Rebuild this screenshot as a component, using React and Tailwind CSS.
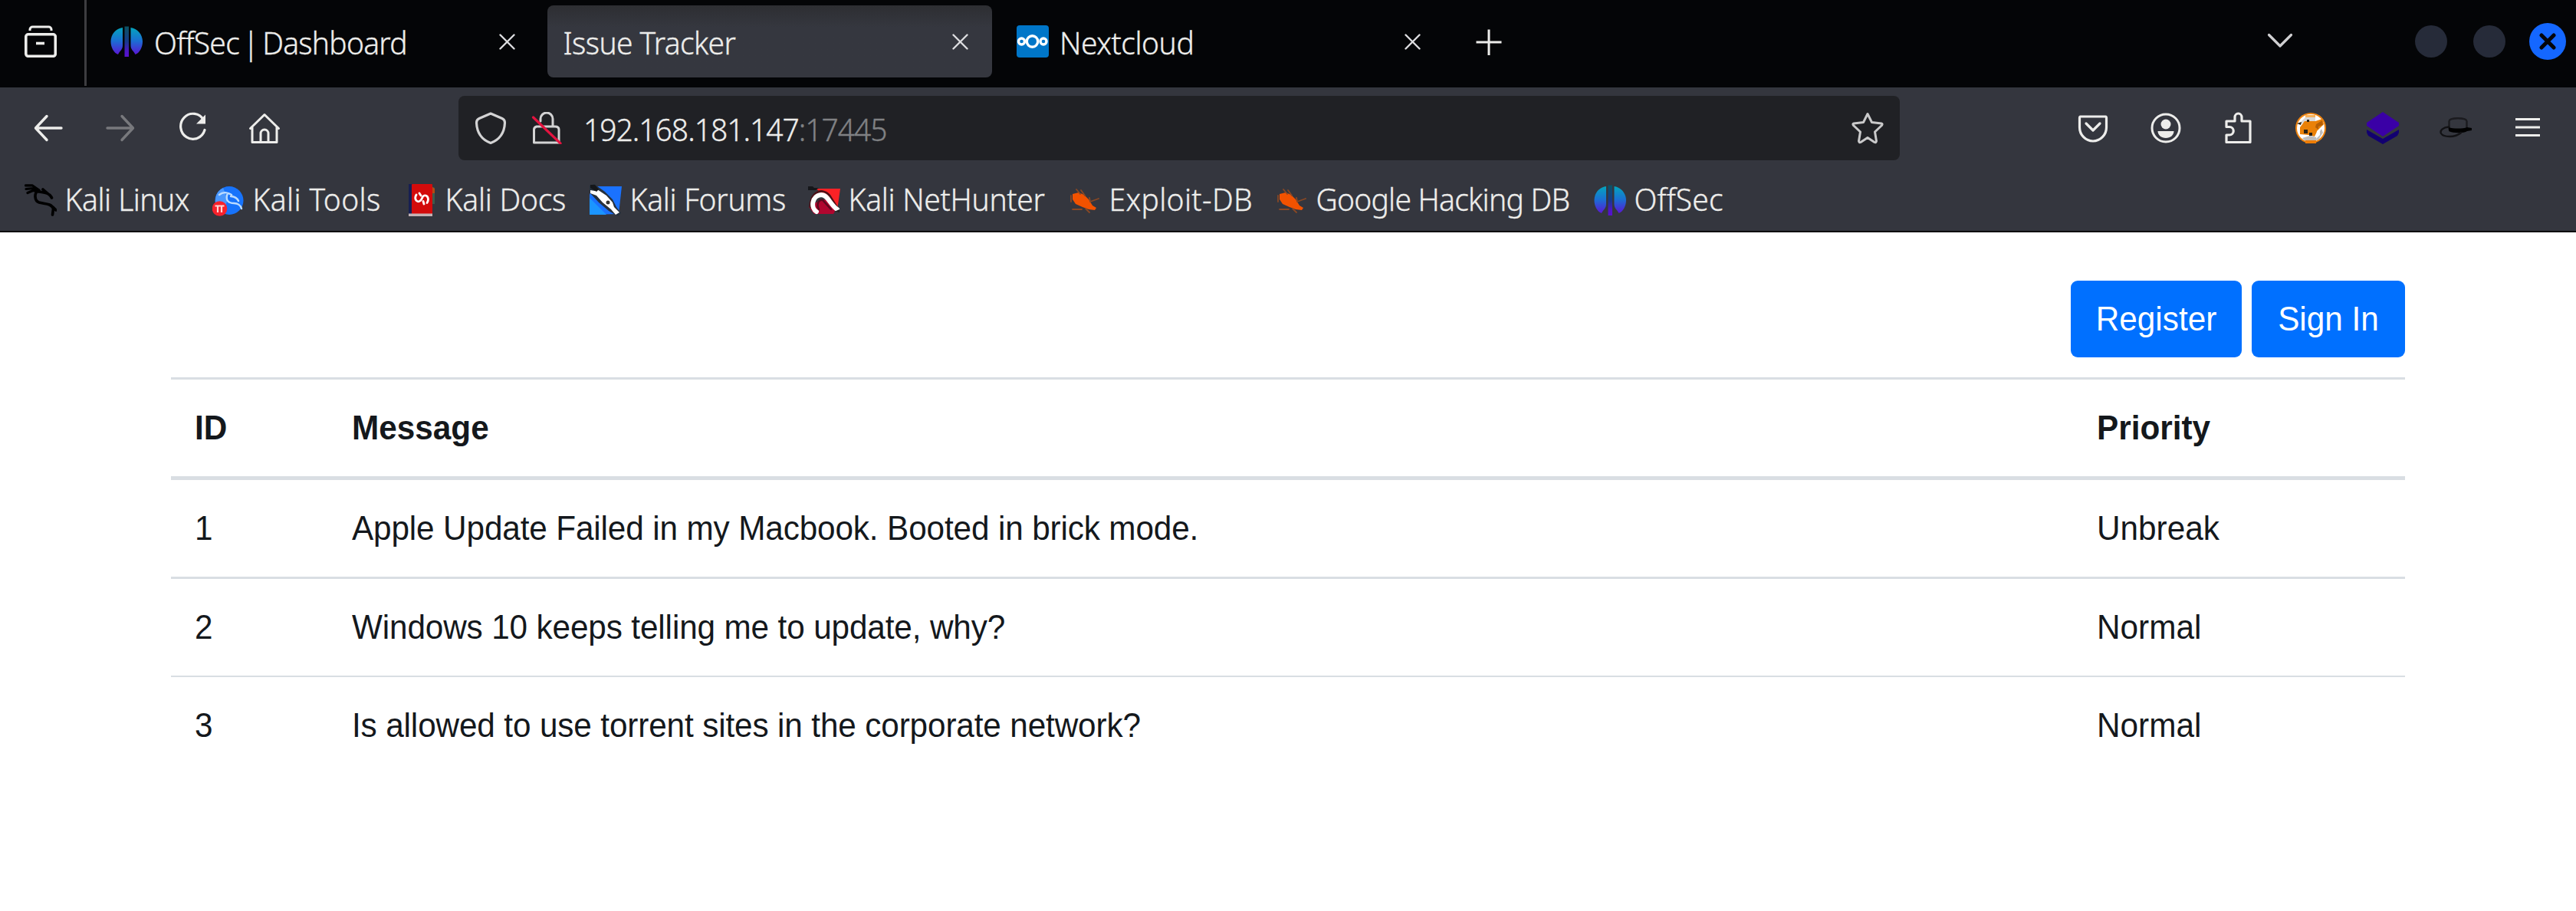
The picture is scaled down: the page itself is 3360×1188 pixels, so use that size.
import React from "react";

const Svg = ({ className = "", children, ...rest }) => (
  <svg
    width="42"
    height="42"
    viewBox="0 0 42 42"
    fill="none"
    stroke="currentColor"
    strokeWidth="3"
    strokeLinecap="round"
    strokeLinejoin="round"
    className={"block shrink-0 " + className}
    {...rest}
  >
    {children}
  </svg>
);

const Label = ({ className = "", children }) => (
  <span className={"block scale-y-[1.04] whitespace-pre font-['Noto_Sans',sans-serif] text-[39px] leading-[54px] font-[350] [-webkit-text-stroke:0.35px_currentColor] " + className}>
    {children}
  </span>
);

/* ---------- icons ---------- */

const FirefoxView = () => (
  <Svg strokeLinecap="butt">
    <path d="M7 7V5.5A3.500 3.500 0 0 1 10.500 2H31.500A3.500 3.500 0 0 1 35 5.500V7" />
    <rect x="1.800" y="11.800" width="38.500" height="28.500" rx="3" strokeWidth="3.600" />
    <path d="M15 23.500H26" strokeWidth="3.600" />
  </Svg>
);

const OffSec = ({ id }) => (
  <Svg stroke="none">
    <defs>
      <linearGradient id={id + "a"} x1="0" y1="3" x2="0" y2="38" gradientUnits="userSpaceOnUse">
        <stop offset="0" stopColor="#04a5bd" />
        <stop offset="0.5" stopColor="#1b6ed4" />
        <stop offset="1" stopColor="#5a16d6" />
      </linearGradient>
      <linearGradient id={id + "b"} x1="0" y1="0" x2="0" y2="42" gradientUnits="userSpaceOnUse">
        <stop offset="0" stopColor="#0b5560" />
        <stop offset="0.5" stopColor="#16398a" />
        <stop offset="0.8" stopColor="#4d16c4" />
        <stop offset="1" stopColor="#5a10d0" />
      </linearGradient>
    </defs>
    <path d="M16 3C7 4 0.500 12 0.500 21C0.500 29 4.500 36 10 38C12.500 33 16 32 16 26Z" fill={`url(#${id}a)`} />
    <path d="M26.500 3C35 4 42 12 42 21C42 29 38 36 32.500 38C30 33 26.500 32 26.500 26Z" fill={`url(#${id}a)`} />
    <path d="M18.500 1.500H24V41H18.500Z" fill={`url(#${id}b)`} />
  </Svg>
);

const Nextcloud = () => (
  <Svg stroke="#fff" strokeWidth="3.400">
    <rect width="42" height="42" rx="4" fill="#0076c8" stroke="none" />
    <circle cx="20.500" cy="21" r="7.200" />
    <circle cx="6.500" cy="21" r="4" />
    <circle cx="35" cy="21" r="4" />
  </Svg>
);

const TabClose = () => (
  <svg width="21" height="21" viewBox="0 0 21 21" className="block shrink-0" stroke="#dddde0" strokeWidth="2.400" strokeLinecap="round">
    <path d="M1.500 1.500L19.500 19.500M19.500 1.500L1.500 19.500" />
  </svg>
);

const Plus = () => (
  <Svg strokeLinecap="butt"><path d="M21 4.500V38M4.500 21H37.500" /></Svg>
);
const Chevron = () => (
  <Svg className="text-[#d0d0d2]" strokeWidth="3.200"><path d="M6.500 12.500L21 27L35.500 12.500" /></Svg>
);
const Back = () => (
  <Svg strokeWidth="3.400"><path d="M38 21H5M19 5.500L4.500 21L19 36.500" /></Svg>
);
const Forward = () => (
  <Svg strokeWidth="3.400" className="text-[#78797d]"><path d="M4 21H37M23 5.500L37.500 21L23 36.500" /></Svg>
);
const Reload = () => (
  <Svg strokeWidth="3.200">
    <path d="M35.500 10.500A16 16.500 0 1 0 37 23.500" />
    <path d="M38 3.500V15.500H26Z" fill="currentColor" stroke="none" />
  </Svg>
);
const Home = () => (
  <Svg strokeWidth="3">
    <path d="M2.500 21.500L21 3.500L39.500 21.500M5 19.500V39.500H37V19.500" />
    <path d="M16 39V28A5 5 0 0 1 26 28V39" />
  </Svg>
);
const Shield = () => (
  <Svg className="text-[#d3d3d4]" strokeWidth="3.200">
    <path d="M21 2L36 8.500Q39.500 10 39.500 14C39 26 33 36 21 40.500C9 36 3 26 2.500 14Q2.500 10 6 8.500Z" />
  </Svg>
);
const Lock = () => (
  <Svg className="text-[#d3d3d4]" strokeWidth="3">
    <path d="M12 12V9A8 8 0 0 1 28 9V19M7 19H31Q36 19 36 23V40H3.500V23Q3.500 20 7 19" />
    <path d="M2.500 7L38 41" stroke="#e3133f" strokeWidth="3.200" />
  </Svg>
);
const Star = () => (
  <Svg className="text-[#c9c9ca]" strokeWidth="3">
    <path d="M21 2.500L26.500 13.500L39 15Q41 15.500 39.500 17.500L30.500 26L32.500 38Q32 40.500 30 39.500L21 33.500L12 39.500Q10 40.500 9.500 38L11.500 26L2.500 17.500Q1 15.500 3 15L15.500 13.500Z" />
  </Svg>
);
const Pocket = () => (
  <Svg strokeWidth="3.200">
    <path d="M4.500 6H37.500Q38.500 6 38.500 8V20A17 17.500 0 0 1 3.500 20V8Q3.500 6 4.500 6Z" />
    <path d="M12 15L21 24L30 15" />
  </Svg>
);
const Account = () => (
  <Svg strokeWidth="3">
    <circle cx="21" cy="21" r="18" />
    <circle cx="21" cy="16" r="6.500" fill="currentColor" stroke="none" />
    <path d="M10.500 25H31.500C31.500 30 27 34 21 34C15 34 10.500 30 10.500 25Z" fill="currentColor" stroke="none" />
  </Svg>
);
const Puzzle = () => (
  <Svg strokeWidth="3.200">
    <path d="M6 12H17V7A4.500 5 0 0 1 26 7V12H37V39.500H6V30H10A5 5 0 0 0 10 19.500H6Z" />
  </Svg>
);
const FoxyProxy = () => (
  <Svg stroke="none">
    <circle cx="21" cy="21" r="20" fill="#ee8410" />
    <circle cx="21" cy="21" r="18" fill="#fff" />
    <path d="M5 16L14 7L24 4L27 7V12L15 14Z" fill="#d9d9d9" />
    <path d="M14 4H27V7H14Z" fill="#f7b25c" />
    <path d="M7 20L13 12L27 12L36 9L38 16L34 20L30 24L26 32L18 30L7 29Z" fill="#ea8108" />
    <path d="M28 16L36 11L37 17L31 19V23L27 20Z" fill="#b65f05" />
    <path d="M12 23H17V28H12ZM19 27H23V31H19ZM16 10H19V13H16ZM3 15L9 13L8 17Z" fill="#2c2418" />
    <path d="M10 34L20 31L28 33L35 22L37 27L31 36L21 39L13 37Z" fill="#bdbdbd" />
    <path d="M29 25L33 22V30L28 35Z" fill="#fff" />
    <path d="M14 37H28V41H14Z" fill="#ee7d05" />
  </Svg>
);
const Wappalyzer = () => (
  <Svg stroke="none">
    <path d="M0 23L21 35L42 23V27L40 31L21 42L2 31L0 27Z" fill="#120070" />
    <path d="M21 0L42 14V18L21 32L0 18V14Z" fill="#3a00a6" />
  </Svg>
);
const Hat = () => (
  <Svg stroke="#08080a" strokeWidth="2.400">
    <path d="M12.500 22V12C13 7 35 7 35.500 12V22" stroke="#1b1b1f" />
    <path d="M12 20C18 22 30 22 36 20L42 21V24L36 25C32 28 18 28 12 25Z" fill="#000" stroke="none" />
    <path d="M12 19.500C5 20 0 24 2 28C5 33 20 34 28 27" stroke="#121215" />
  </Svg>
);
const Menu = () => (
  <Svg strokeWidth="3.200" strokeLinecap="butt"><path d="M5 9.500H37M5 20H37M5 30.500H37" /></Svg>
);

const KaliDragon = () => (
  <Svg stroke="#000" strokeWidth="3.600">
    <path d="M1.500 1.800H10L19 8M2 6.500L12 5.500L19 8M4 11.500L11 8.500L18 10" strokeWidth="3.200" />
    <path d="M18 8C12 12 13 22 19 24C26 26 35 25 37.500 32L36.500 40M37 30L41 34" />
    <path d="M19 10C27 11 33 12 35.500 18M24 7L31 13" />
  </Svg>
);
const KaliTools = () => (
  <Svg stroke="none">
    <circle cx="22" cy="21.500" r="18.500" fill="#1773fb" />
    <path d="M4 20A18.500 18.500 0 0 1 14 5L20 20L14 38C7 34 3 28 4 20Z" fill="#4b98fd" />
    <path d="M9 14C15 9 22 12 25 14M20 12C16 22 22 25 28 25C33 25 37 28 38 32M24 16C29 16 33 19 34 22" fill="none" stroke="#bcdcff" strokeWidth="2.400" />
    <circle cx="9.500" cy="32" r="9.800" fill="#f6222c" />
    <path d="M3.500 28.500H15.500M7 28.500V37M12 28.500V37" stroke="#ffd5d5" strokeWidth="2.200" strokeLinecap="butt" />
  </Svg>
);
const KaliDocs = () => (
  <Svg stroke="none">
    <path d="M5 0H10V40H5Z" fill="#171f52" />
    <path d="M35 3L39 5V26H35Z" fill="#3d5c4c" />
    <path d="M36 4L39 6V12H36Z" fill="#b34a12" />
    <rect x="9" y="0" width="27" height="40" rx="1" fill="#d30b0b" />
    <path d="M5 38.500H36V42H5Z" fill="#c3b3b5" />
    <path d="M15 14C12 19 15 24 19 22.500C23.500 21 21.500 16 25.500 15C30 14 32 20 29 24.500M19 12L21 15M24 22.500L25 26" fill="none" stroke="#fff" strokeWidth="2.800" />
  </Svg>
);
const KaliForums = () => (
  <Svg stroke="none">
    <path d="M5 3H42L38 39L0 40V14Z" fill="#1a72ff" />
    <path d="M0 18L22 40H0Z" fill="#1b95ff" />
    <path d="M0 2L6 0L20 10L30 20L35 30L41 38L37 42L25 35L12 24L0 11Z" fill="#26303c" />
    <path d="M1 8L7 9L10 7L22 15L30 24L32 30L39 37L34 40L28 33L17 24L9 15L1 12Z" fill="#fff" />
    <circle cx="24" cy="24" r="2.500" fill="#333" />
    <path d="M1 1H7L12 7L9 10L1 5Z" fill="#15171a" />
  </Svg>
);
const NetHunter = () => (
  <Svg stroke="none">
    <path d="M11 6H42L38 34L20 16Z" fill="#fb2226" />
    <path d="M1 30L8 39H33L36 34L24 20L14 22Z" fill="#b0062f" />
    <path d="M3 30C2 14 16 2 28 15L38 31" fill="none" stroke="#4c1118" strokeWidth="3" />
    <path d="M11 36C3 31 5 15 17 14C26 14 28 26 38 33" fill="none" stroke="#fff" strokeWidth="6" />
    <path d="M14 33C11 27 13 20 19 21L30 33" fill="none" stroke="#5a0a1e" strokeWidth="2.400" />
    <path d="M34 36L41 33V37Z" fill="#222" />
    <path d="M0 3H6L8 5H14L10 8H0Z" fill="#15161a" />
  </Svg>
);
const ExploitDb = () => (
  <Svg stroke="none">
    <path d="M5 13L13 11L20 14L26 20L31 28L36 31L34 34L26 33L18 30L9 26L5 20Z" fill="#f25200" />
    <path d="M10 7L15 13M16 8L21 15M27 18L28 23L39 19M3 15V23M5 33H17M22 32L27 37" stroke="#8a4824" strokeWidth="1.800" />
  </Svg>
);

/* ---------- browser chrome ---------- */

const bookmarks = [
  { text: "Kali Linux", icon: <KaliDragon />, box: "w-[245px]", track: "tracking-[-0.5px]" },
  { text: "Kali Tools", icon: <KaliTools />, box: "w-[251px]", track: "tracking-[0.35px]" },
  { text: "Kali Docs", icon: <KaliDocs />, box: "w-[241px]", track: "tracking-[-0.25px]" },
  { text: "Kali Forums", icon: <KaliForums />, box: "w-[285px]", track: "tracking-[-0.3px]" },
  { text: "Kali NetHunter", icon: <NetHunter />, box: "w-[340px]", track: "tracking-[-0.3px]" },
  { text: "Exploit-DB", icon: <ExploitDb />, box: "w-[270px]", track: "tracking-[0.35px]" },
  { text: "Google Hacking DB", icon: <ExploitDb />, box: "w-[415px]", track: "tracking-[-0.75px]" },
  { text: "OffSec", icon: <OffSec id="bm" />, box: "w-[200px]", track: "tracking-[0.1px]" },
];

function TabBar() {
  return (
    <div className="flex h-[114px] items-start bg-[#040507] text-[#ededeb]">
      <div className="flex h-[112px] w-[113px] shrink-0 items-start border-r-[3px] border-[#3d3d40] pt-[33px] pl-8">
        <FirefoxView />
      </div>
      <div className="flex h-[108px] w-[601px] shrink-0 items-center pr-[42px] pl-[31px]">
        <OffSec id="tab" />
        <Label className="mt-[2px] ml-[15px] grow tracking-[-0.75px] [word-spacing:-4.5px]">OffSec | Dashboard</Label>
        <TabClose />
      </div>
      <div className="mt-[7px] flex h-[94px] w-[580px] shrink-0 items-center rounded-[8px] bg-linear-to-b from-[#2d2e32] to-[#35373f] to-30% pr-[31px] pl-[20.500px]">
        <Label className="mt-[2px] grow tracking-[-0.6px]">Issue Tracker</Label>
        <TabClose />
      </div>
      <div className="flex h-[108px] w-[591px] shrink-0 items-center pr-[32px] pl-8">
        <Nextcloud />
        <Label className="mt-[2px] ml-[14px] grow tracking-[-0.45px]">Nextcloud</Label>
        <TabClose />
      </div>
      <div className="ml-[36px] pt-[34px]"><Plus /></div>
      <div className="ml-auto flex h-[108px] items-center pr-[13px]">
        <Chevron />
        <div className="ml-[155px] size-[42px] rounded-full bg-[#262b39]" />
        <div className="ml-[34px] size-[42px] rounded-full bg-[#262b39]" />
        <div className="ml-[31px] flex size-[48px] items-center justify-center rounded-full bg-[#1467ff]">
          <svg width="22" height="22" viewBox="0 0 22 22" stroke="#05060a" strokeWidth="5" strokeLinecap="round">
            <path d="M3 3L19 19M19 3L3 19" />
          </svg>
        </div>
      </div>
    </div>
  );
}

function NavBar() {
  return (
    <div className="flex h-[106px] items-center text-[#ededeb]">
      <div className="flex w-[598px] items-center gap-[52px] pl-[42px]">
        <Back />
        <Forward />
        <Reload />
        <Home />
      </div>
      <div className="flex h-[84px] w-[1880px] items-center rounded-[8px] bg-[#202125] pr-[21px] pl-[21px]">
        <Shield />
        <div className="ml-8"><Lock /></div>
        <Label className="mt-[2px] ml-[26px] tracking-[-1px]">
          192.168.181.147<span className="text-[#808184]">:17445</span>
        </Label>
        <div className="ml-auto"><Star /></div>
      </div>
      <div className="ml-auto flex items-center gap-[52.500px] pr-[42px]">
        <Pocket />
        <Account />
        <Puzzle />
        <FoxyProxy />
        <Wappalyzer />
        <Hat />
        <Menu />
      </div>
    </div>
  );
}

function Bookmarks() {
  return (
    <div className="flex h-[83px] items-center border-b-2 border-[#050608] pl-8 text-[#ededeb]">
      {bookmarks.map((b) => (
        <div key={b.text} className={"flex shrink-0 items-center " + b.box}>
          {b.icon}
          <Label className={"-mt-[4px] ml-[10.500px] " + b.track}>{b.text}</Label>
        </div>
      ))}
    </div>
  );
}

/* ---------- page ---------- */

const issues = [
  { id: 1, message: "Apple Update Failed in my Macbook. Booted in brick mode.", priority: "Unbreak", row: "h-[129px] border-b-[3px]" },
  { id: 2, message: "Windows 10 keeps telling me to update, why?", priority: "Normal", row: "h-[128px] border-b-2" },
  { id: 3, message: "Is allowed to use torrent sites in the corporate network?", priority: "Normal", row: "h-[126px]" },
];

const Cell = ({ className = "", children }) => (
  <div className={"scale-y-[1.07] whitespace-nowrap " + className}>{children}</div>
);

const Button = ({ className, children }) => (
  <button className={"flex h-[100px] items-center justify-center rounded-[9px] bg-[#0070ff] text-white " + className}>
    <span className="block scale-y-[1.07]">{children}</span>
  </button>
);

const grid = "grid grid-cols-[205px_2275px_1fr] items-center border-[#d9dee3] pl-[31px]";

export default function App() {
  return (
    <div className="h-[1188px] w-[3360px] overflow-hidden bg-white">
      <header className="bg-[#34363e]">
        <TabBar />
        <NavBar />
        <Bookmarks />
      </header>
      <main className="mx-[223px] mt-[63px] font-['Liberation_Sans',Arial,sans-serif] text-[42.300px] leading-[64px] text-[#14181c]">
        <div className="flex justify-end gap-[13px]">
          <Button className="w-[223px]">Register</Button>
          <Button className="w-[200px]">Sign In</Button>
        </div>
        <div className="mt-[26px]">
          <div className={grid + " h-[134px] border-t-[3px] border-b-[5px] font-bold"}>
            <Cell>ID</Cell>
            <Cell>Message</Cell>
            <Cell className="pl-px">Priority</Cell>
          </div>
          {issues.map((i) => (
            <div key={i.id} className={grid + " " + i.row}>
              <Cell>{i.id}</Cell>
              <Cell className="tracking-[-0.14px]">{i.message}</Cell>
              <Cell className="pl-px">{i.priority}</Cell>
            </div>
          ))}
        </div>
      </main>
    </div>
  );
}
